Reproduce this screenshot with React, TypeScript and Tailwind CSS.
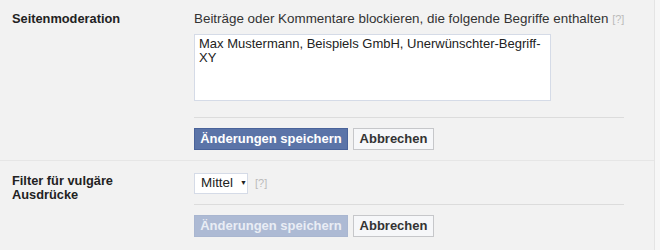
const font = { fontFamily: '"Liberation Sans", Arial, sans-serif' }

function SaveButtons({ disabled }: { disabled?: boolean }) {
  return (
    <div className="flex gap-[5px]">
      <button
        className={
          disabled
            ? 'h-[22px] w-[154px] border border-[#a9b6d0] bg-[#adbad4] text-[13px] font-bold text-[#e9edf5]'
            : 'h-[22px] w-[154px] border border-[#4a639a] bg-[#5b74a8] text-[13px] font-bold text-white'
        }
      >
        Änderungen speichern
      </button>
      <button className="h-[22px] w-[81px] border border-[#c6c7ca] bg-[#f6f7f9] text-[13px] font-bold text-[#333]">
        Abbrechen
      </button>
    </div>
  )
}

export default function App() {
  return (
    <div className="flex h-[250px] w-[660px] bg-[#f7f7f7]" style={font}>
      <div className="flex w-[655px] flex-col border-r border-[#e4e4e4] bg-[#f2f2f2] text-[13.4px] text-[#333]">
        <div className="flex border-b border-[#e6e6e6] pb-[10px] pt-[11px]">
          <div className="w-[194px] pl-3 text-[12.8px] leading-4 font-bold text-[#222]">Seitenmoderation</div>
          <div className="flex w-[430px] flex-col">
            <div className="whitespace-nowrap leading-4">
              Beiträge oder Kommentare blockieren, die folgende Begriffe enthalten{' '}
              <span className="text-[11px] text-[#bbb]">[?]</span>
            </div>
            <textarea
              className="mt-[7px] h-[67px] w-[357px] resize-none border border-[#d5dbe7] bg-white px-[4px] py-[2px] text-[13px] leading-[14px] text-[#222] outline-none"
              defaultValue={'Max Mustermann, Beispiels GmbH, Unerwünschter-Begriff-\nXY'}
            />
            <div className="mt-[16px] border-t border-[#dcdcdc]" />
            <div className="mt-[10px]">
              <SaveButtons />
            </div>
          </div>
        </div>
        <div className="flex pt-[12px]">
          <div className="w-[194px] pl-3 pt-[1px] text-[12.8px] leading-[14px] font-bold text-[#222]">
            Filter für vulgäre
            <br />
            Ausdrücke
          </div>
          <div className="flex w-[430px] flex-col">
            <div className="flex items-center gap-[7px]">
              <div className="flex h-[21px] w-[54px] items-center border border-[#d5dbe7] bg-white pl-[6px] text-[#222]">
                Mittel
                <span className="ml-[7px] text-[7px]">▼</span>
              </div>
              <span className="text-[11px] text-[#bbb]">[?]</span>
            </div>
            <div className="mt-[10px] border-t border-[#dcdcdc]" />
            <div className="mt-[10px]">
              <SaveButtons disabled />
            </div>
          </div>
        </div>
      </div>
    </div>
  )
}
